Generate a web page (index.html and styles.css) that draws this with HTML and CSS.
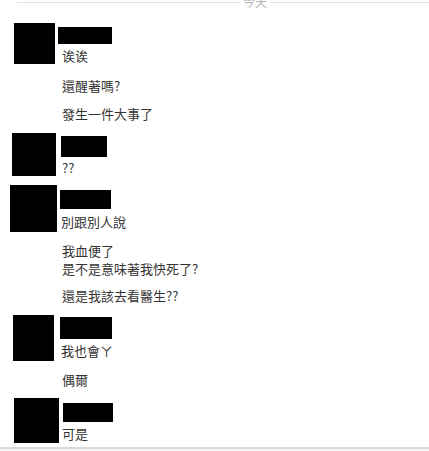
FILE: index.html
```html
<!DOCTYPE html>
<html lang="zh-Hant">
<head>
<meta charset="utf-8">
<title>Chat</title>
<link rel="stylesheet" href="styles.css">
</head>
<body>
<div class="chat">
  <div class="day">
    <div class="day-inner">
      <span class="day-line day-line-left"></span>
      <span class="day-label">今天</span>
      <span class="day-line"></span>
    </div>
  </div>

  <div class="group g1">
    <div class="avatar"></div>
    <div class="body">
      <div class="name"></div>
      <p class="msg first">诶诶</p>
    </div>
  </div>
  <p class="msg follow f1">還醒著嗎?</p>
  <p class="msg follow f2">發生一件大事了</p>

  <div class="group g2">
    <div class="avatar"></div>
    <div class="body">
      <div class="name"></div>
      <p class="msg first">??</p>
    </div>
  </div>

  <div class="group g3">
    <div class="avatar"></div>
    <div class="body">
      <div class="name"></div>
      <p class="msg first">別跟別人說</p>
    </div>
  </div>
  <p class="msg follow f3">我血便了<br>是不是意味著我快死了?</p>
  <p class="msg follow f4">還是我該去看醫生??</p>

  <div class="group g4">
    <div class="avatar"></div>
    <div class="body">
      <div class="name"></div>
      <p class="msg first">我也會ㄚ</p>
    </div>
  </div>
  <p class="msg follow f5">偶爾</p>

  <div class="group g5">
    <div class="avatar"></div>
    <div class="body">
      <div class="name"></div>
      <p class="msg first">可是</p>
    </div>
  </div>

  <div class="footer"></div>
</div>
</body>
</html>
```

FILE: styles.css
```css
html, body {
  margin: 0;
  padding: 0;
  background: #ffffff;
}

body {
  width: 429px;
  height: 451px;
  overflow: hidden;
  font-family: "Noto Sans CJK TC", "Noto Sans", sans-serif;
  font-size: 13px;
  line-height: 18px;
  color: #333333;
}

.chat {
  display: flex;
  flex-direction: column;
}

/* day divider, cut at the top edge */
.day {
  height: 8px;
  overflow: hidden;
}

.day-inner {
  display: flex;
  align-items: center;
  height: 14px;
  margin-top: -5px;
  padding-left: 17px;
}

.day-line {
  flex: 1;
  height: 1px;
  background: #e2e2e2;
}

.day-line-left {
  flex: 0 0 223px;
}

.day-label {
  padding: 0 3px 0 3px;
  font-size: 12px;
  line-height: 14px;
  color: #b5b5b5;
}

/* message groups */
.group {
  display: flex;
  align-items: flex-start;
}

.avatar {
  background: #000000;
  flex: 0 0 auto;
}

.body {
  display: flex;
  flex-direction: column;
  align-items: flex-start;
}

.name {
  background: #000000;
}

.msg {
  margin: 0;
  white-space: nowrap;
}

.follow {
  margin-left: 62px;
}

/* group 1 */
.g1 { margin-top: 15px; padding-left: 14px; }
.g1 .avatar { width: 41px; height: 41px; }
.g1 .body { margin-left: 3px; margin-top: 4px; }
.g1 .name { width: 54px; height: 17px; }
.g1 .first { margin-top: 3px; margin-left: 4px; }

.f1 { margin-top: 12px; }
.f2 { margin-top: 10px; }

/* group 2 */
.g2 { margin-top: 10px; padding-left: 12px; }
.g2 .avatar { width: 44px; height: 43px; }
.g2 .body { margin-left: 5px; margin-top: 3px; }
.g2 .name { width: 46px; height: 21px; }
.g2 .first { margin-top: 2px; margin-left: 1px; }

/* group 3 */
.g3 { margin-top: 8px; padding-left: 10px; }
.g3 .avatar { width: 47px; height: 47px; }
.g3 .body { margin-left: 3px; margin-top: 5px; }
.g3 .name { width: 51px; height: 19px; }
.g3 .first { margin-top: 4px; margin-left: 1px; }

.f3 { margin-top: 10px; }
.f4 { margin-top: 9px; }

/* group 4 */
.g4 { margin-top: 10px; padding-left: 13px; }
.g4 .avatar { width: 41px; height: 46px; }
.g4 .body { margin-left: 6px; margin-top: 2px; }
.g4 .name { width: 52px; height: 22px; }
.g4 .first { margin-top: 3px; margin-left: 1px; }

.f5 { margin-top: 10px; }

/* group 5 */
.g5 { margin-top: 9px; padding-left: 14px; }
.g5 .avatar { width: 45px; height: 45px; }
.g5 .body { margin-left: 4px; margin-top: 5px; }
.g5 .name { width: 50px; height: 19px; }
.g5 .first { margin-top: 3px; margin-left: -1px; }

.footer {
  margin-top: 4px;
  height: 10px;
  border-top: 2px solid #dadada;
  background: #f4f4f4;
}
```
